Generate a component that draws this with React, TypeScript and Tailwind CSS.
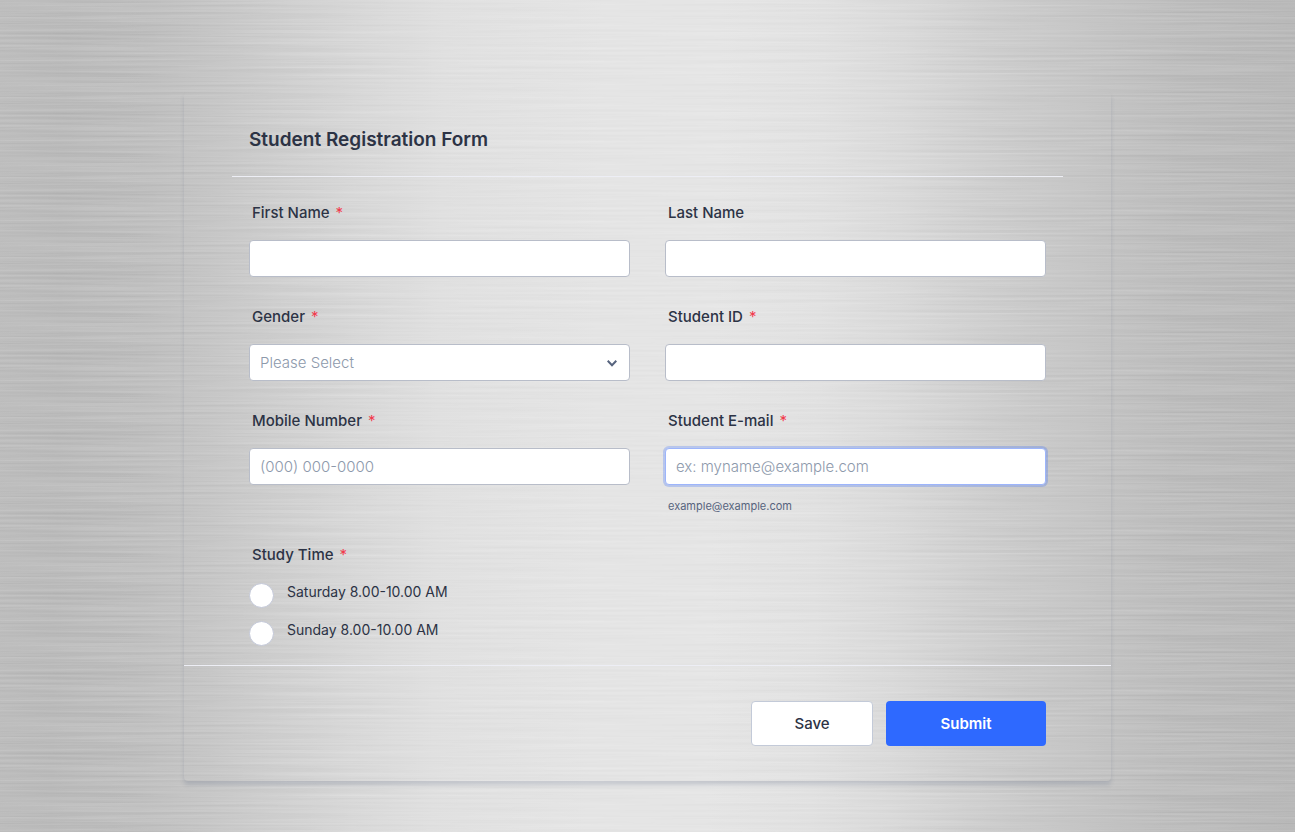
import { useId } from "react";
import type { ReactNode } from "react";
import clsx from "clsx";

const controlClass =
  "block h-[37px] w-full rounded-[4px] border bg-white px-[10px] text-[15px] font-light text-[#2c3345] placeholder:text-[#8d99ab] outline-none focus:border-[#9db5fb] focus:ring-2 focus:ring-[#2e69ff]/25";

function BrushedMetal() {
  return (
    <div
      aria-hidden="true"
      className="absolute inset-0 -z-10 overflow-hidden bg-[linear-gradient(91deg,#bebebe_0%,#bbbbbb_5%,#bfbfbf_11%,#c7c7c7_17%,#d0d0d0_22%,#d9d9d9_28%,#e0e0e0_34%,#e5e5e5_46%,#e5e5e5_55%,#e1e1e1_63%,#dadada_69%,#d0d0d0_75%,#c7c7c7_82%,#bebebe_90%,#b9b9b9_100%)]"
    >
      <svg className="absolute inset-0 size-full mix-blend-overlay">
        <filter id="brushed" x="0" y="0" width="100%" height="100%" colorInterpolationFilters="sRGB">
          <feTurbulence
            type="fractalNoise"
            baseFrequency="0.005 0.4"
            numOctaves={3}
            seed={7}
            stitchTiles="stitch"
            x="0"
            y="0"
            width="100%"
            height="80"
          />
          <feColorMatrix
            type="matrix"
            values="0.2 0 0 0 0.4  0.2 0 0 0 0.4  0.2 0 0 0 0.4  0 0 0 0 1"
            x="0"
            y="0"
            width="100%"
            height="80"
          />
          <feTile />
        </filter>
        <rect width="100%" height="100%" filter="url(#brushed)" />
      </svg>
    </div>
  );
}

function RequiredMark() {
  return <span className="ml-[6px] font-normal text-[#f23a4c]">*</span>;
}

interface FieldProps {
  label: string;
  required?: boolean;
  children: (id: string) => ReactNode;
}

function Field({ label, required, children }: FieldProps) {
  const id = useId();
  return (
    <div>
      <label htmlFor={id} className="mb-[17px] block pl-[3px] text-[15px] leading-5 font-medium text-[#2c3345]">
        {label}
        {required && <RequiredMark />}
      </label>
      {children(id)}
    </div>
  );
}

function TextField({
  label,
  required,
  type = "text",
  placeholder,
  active,
  help,
}: {
  label: string;
  required?: boolean;
  type?: string;
  placeholder?: string;
  active?: boolean;
  help?: string;
}) {
  return (
    <Field label={label} required={required}>
      {(id) => (
        <>
          <input
            id={id}
            type={type}
            required={required}
            placeholder={placeholder}
            className={clsx(
              controlClass,
              active ? "border-[#9db5fb] ring-2 ring-[#2e69ff]/25" : "border-[#b8bdc9]",
            )}
          />
          {help && <p className="mt-[13px] pl-[3px] text-[11px] leading-4 text-[#57647e]">{help}</p>}
        </>
      )}
    </Field>
  );
}

function GenderField() {
  return (
    <Field label="Gender" required>
      {(id) => (
        <div className="relative">
          <select
            id={id}
            required
            defaultValue=""
            className={clsx(controlClass, "appearance-none border-[#b8bdc9] pt-px text-[#8d99ab]")}
          >
            <option value="">Please Select</option>
            <option value="male">Male</option>
            <option value="female">Female</option>
          </select>
          <svg
            viewBox="0 0 10 7"
            className="pointer-events-none absolute top-4 right-[13px] h-[7px] w-[10px] fill-none stroke-[#57647e] stroke-2"
          >
            <path d="M0.7 0.8 L5 5.3 L9.3 0.8" />
          </svg>
        </div>
      )}
    </Field>
  );
}

const studyTimes = ["Saturday 8.00-10.00 AM", "Sunday 8.00-10.00 AM"];

export default function App() {
  return (
    <main className="relative isolate min-h-screen px-4 pt-[92px] pb-[51px] font-['Inter',sans-serif]">
      <BrushedMetal />
      <form
        className="mx-auto max-w-[927px] rounded-[4px] shadow-[0_4px_4px_rgba(87,100,126,0.21)]"
        onSubmit={(event) => event.preventDefault()}
      >
        <header className="mx-12 border-b border-[#edeef5] px-[17px] pt-[34px] pb-[22px]">
          <h1 className="text-[19px] leading-7 font-semibold text-[#2c3345]">Student Registration Form</h1>
        </header>

        <div className="px-[65px] pt-[26px] pb-[19px]">
          <div className="grid gap-x-[35px] gap-y-[30px] sm:grid-cols-2">
            <TextField label="First Name" required />
            <TextField label="Last Name" />
            <GenderField />
            <TextField label="Student ID" required />
            <TextField label="Mobile Number" required type="tel" placeholder="(000) 000-0000" />
            <TextField
              label="Student E-mail"
              required
              type="email"
              placeholder="ex: myname@example.com"
              active
              help="example@example.com"
            />
          </div>

          <fieldset className="mt-[31px]">
            <legend className="pl-[3px] text-[15px] leading-5 font-medium text-[#2c3345]">
              Study Time
              <RequiredMark />
            </legend>
            <div className="mt-[18px] flex flex-col gap-[13px]">
              {studyTimes.map((time) => (
                <label key={time} className="flex items-start gap-[13px] text-sm leading-[18px] text-[#2c3345]">
                  <input
                    type="radio"
                    name="study-time"
                    value={time}
                    className="size-[25px] shrink-0 appearance-none rounded-full border border-[#c3c8d8] bg-white checked:border-[7px] checked:border-[#2e69ff]"
                  />
                  {time}
                </label>
              ))}
            </div>
          </fieldset>
        </div>

        <footer className="flex justify-end gap-[13px] border-t border-[#edeef5] px-[65px] py-[35px] text-[15px]">
          <button
            type="button"
            className="h-[45px] min-w-[122px] rounded-[4px] border border-[#c3cad8] bg-white pt-px font-medium text-[#2c3345]"
          >
            Save
          </button>
          <button type="submit" className="h-[45px] min-w-40 rounded-[4px] bg-[#2e69ff] pt-px font-semibold text-white">
            Submit
          </button>
        </footer>
      </form>
    </main>
  );
}
